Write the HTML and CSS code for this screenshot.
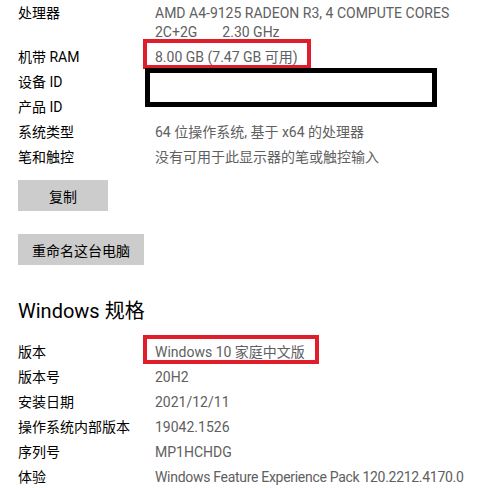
FILE: index.html
```html
<!DOCTYPE html>
<html lang="zh-CN">
<head>
<meta charset="utf-8">
<link rel="stylesheet" href="styles.css">
</head>
<body>
<div class="page">
  <div class="specs first">
    <div class="label">处理器</div>
    <div class="value">AMD A4-9125 RADEON R3, 4 COMPUTE CORES<br>2C+2G<span class="gap"></span>2.30 GHz</div>
    <div class="label">机带 RAM</div>
    <div class="value"><span class="mark">8.00 GB (7.47 GB 可用)<span class="redbox"></span></span></div>
    <div class="label">设备 ID</div>
    <div class="value"><span class="hidden-wrap"><span class="blackbox"></span></span></div>
    <div class="label">产品 ID</div>
    <div class="value"></div>
    <div class="label">系统类型</div>
    <div class="value">64 位操作系统, 基于 x64 的处理器</div>
    <div class="label">笔和触控</div>
    <div class="value">没有可用于此显示器的笔或触控输入</div>
  </div>

  <div class="actions">
    <button class="btn btn-copy">复制</button>
    <button class="btn btn-rename">重命名这台电脑</button>
  </div>

  <h2 class="heading">Windows 规格</h2>

  <div class="specs">
    <div class="label">版本</div>
    <div class="value"><span class="mark">Windows 10 家庭中文版<span class="redbox redbox2"></span></span></div>
    <div class="label">版本号</div>
    <div class="value">20H2</div>
    <div class="label">安装日期</div>
    <div class="value">2021/12/11</div>
    <div class="label">操作系统内部版本</div>
    <div class="value">19042.1526</div>
    <div class="label">序列号</div>
    <div class="value">MP1HCHDG</div>
    <div class="label">体验</div>
    <div class="value narrow">Windows Feature Experience Pack 120.2212.4170.0</div>
  </div>
</div>
</body>
</html>
```

FILE: styles.css
```css
html, body {
  margin: 0;
  padding: 0;
  background: #ffffff;
}

body {
  font-family: Roboto, "Noto Sans CJK SC", sans-serif;
  font-size: 14px;
  color: #000;
  width: 490px;
  height: 488px;
  overflow: hidden;
}

.page {
  padding: 0 0 0 18px;
}

.specs {
  display: grid;
  grid-template-columns: 137px 1fr;
  row-gap: 6px;
  line-height: 19px;
}

.specs.first {
  padding-top: 4px;
}

.label {
  color: #000;
  white-space: nowrap;
}

.value {
  color: #606060;
  white-space: nowrap;
  min-height: 19px;
}

.value.narrow {
  letter-spacing: -0.3px;
}

.gap {
  display: inline-block;
  width: 25px;
}

.mark {
  position: relative;
  display: inline-block;
}

.redbox {
  position: absolute;
  left: -12px;
  top: -9px;
  width: 160px;
  height: 22px;
  border: 4.5px solid #e01e2b;
}

.redbox2 {
  width: 168px;
  top: -8px;
  height: 21px;
}

.hidden-wrap {
  position: relative;
  display: block;
  height: 19px;
}

.blackbox {
  position: absolute;
  left: -10px;
  top: -5px;
  width: 282px;
  height: 29px;
  border: 5px solid #000;
  background: #fff;
}

.actions {
  display: flex;
  flex-direction: column;
  align-items: flex-start;
  gap: 23px;
  margin-top: 13px;
}

.btn {
  font-family: Roboto, "Noto Sans CJK SC", sans-serif;
  font-size: 14px;
  color: #000;
  background: #cccccc;
  border: none;
  height: 31px;
  padding: 0;
  margin: 0;
}

.btn-copy {
  width: 90px;
}

.btn-rename {
  width: 126px;
}

.heading {
  font-weight: 400;
  font-size: 20px;
  line-height: 28px;
  margin: 32px 0 18px 0;
}
```
